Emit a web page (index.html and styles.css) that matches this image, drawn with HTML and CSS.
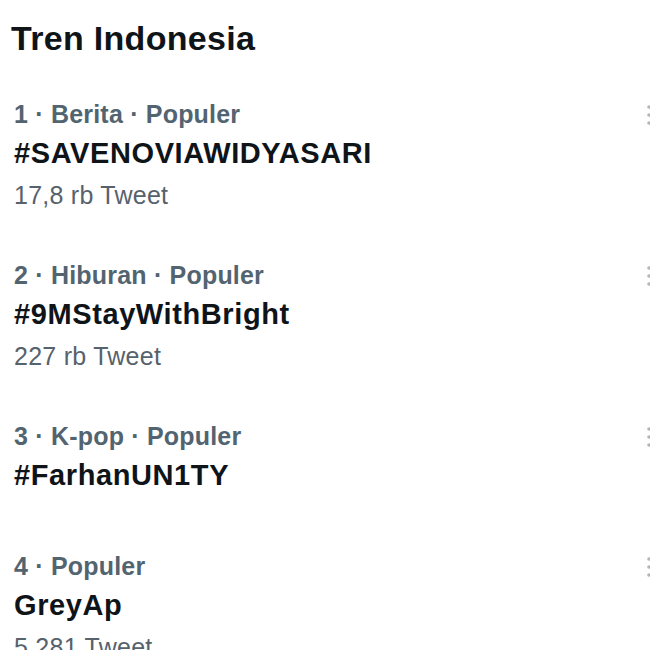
FILE: index.html
```html
<!DOCTYPE html>
<html lang="id">
<head>
<meta charset="utf-8">
<title>Tren Indonesia</title>
<link rel="stylesheet" href="styles.css">
</head>
<body>
<main class="trends">
  <h1 class="title">Tren Indonesia</h1>

  <section class="trend">
    <div class="meta-row">
      <span class="meta">1 · Berita · Populer</span>
      <svg class="more" viewBox="0 0 6 20" width="6" height="20" aria-hidden="true"><circle cx="3" cy="2" r="1.8"/><circle cx="3" cy="10" r="1.8"/><circle cx="3" cy="18" r="1.8"/></svg>
    </div>
    <div class="name">#SAVENOVIAWIDYASARI</div>
    <div class="count">17,8 rb Tweet</div>
  </section>

  <section class="trend">
    <div class="meta-row">
      <span class="meta">2 · Hiburan · Populer</span>
      <svg class="more" viewBox="0 0 6 20" width="6" height="20" aria-hidden="true"><circle cx="3" cy="2" r="1.8"/><circle cx="3" cy="10" r="1.8"/><circle cx="3" cy="18" r="1.8"/></svg>
    </div>
    <div class="name">#9MStayWithBright</div>
    <div class="count">227 rb Tweet</div>
  </section>

  <section class="trend trend-nocount">
    <div class="meta-row">
      <span class="meta">3 · K-pop · Populer</span>
      <svg class="more" viewBox="0 0 6 20" width="6" height="20" aria-hidden="true"><circle cx="3" cy="2" r="1.8"/><circle cx="3" cy="10" r="1.8"/><circle cx="3" cy="18" r="1.8"/></svg>
    </div>
    <div class="name">#FarhanUN1TY</div>
  </section>

  <section class="trend">
    <div class="meta-row">
      <span class="meta">4 · Populer</span>
      <svg class="more" viewBox="0 0 6 20" width="6" height="20" aria-hidden="true"><circle cx="3" cy="2" r="1.8"/><circle cx="3" cy="10" r="1.8"/><circle cx="3" cy="18" r="1.8"/></svg>
    </div>
    <div class="name">GreyAp</div>
    <div class="count">5.281 Tweet</div>
  </section>
</main>
</body>
</html>
```

FILE: styles.css
```css
html {
  overflow: hidden;
}

body {
  margin: 0;
  background: #ffffff;
  font-family: "Liberation Sans", Arial, sans-serif;
  color: #0f1419;
}

.trends {
  display: flex;
  flex-direction: column;
}

.title {
  margin: 0;
  padding: 18px 11px 18px;
  font-size: 34px;
  line-height: 40px;
  font-weight: 700;
  letter-spacing: 0.3px;
  color: #0f1419;
}

.trend {
  padding: 20px 0 21px 14px;
  display: flex;
  flex-direction: column;
}

.trend-nocount {
  padding-bottom: 32px;
}

.meta-row {
  display: flex;
  align-items: center;
  justify-content: space-between;
  height: 37px;
}

.meta {
  font-size: 25px;
  line-height: 37px;
  font-weight: 700;
  letter-spacing: 0.2px;
  color: #536471;
}

.more {
  fill: #b3b7bb;
  flex: none;
  margin-right: -2px;
}

.name {
  font-size: 29px;
  line-height: 41px;
  font-weight: 700;
  letter-spacing: 0.6px;
  color: #0f1419;
}

.count {
  font-size: 25px;
  line-height: 42px;
  font-weight: 400;
  letter-spacing: 0.25px;
  color: #56626c;
}
```
